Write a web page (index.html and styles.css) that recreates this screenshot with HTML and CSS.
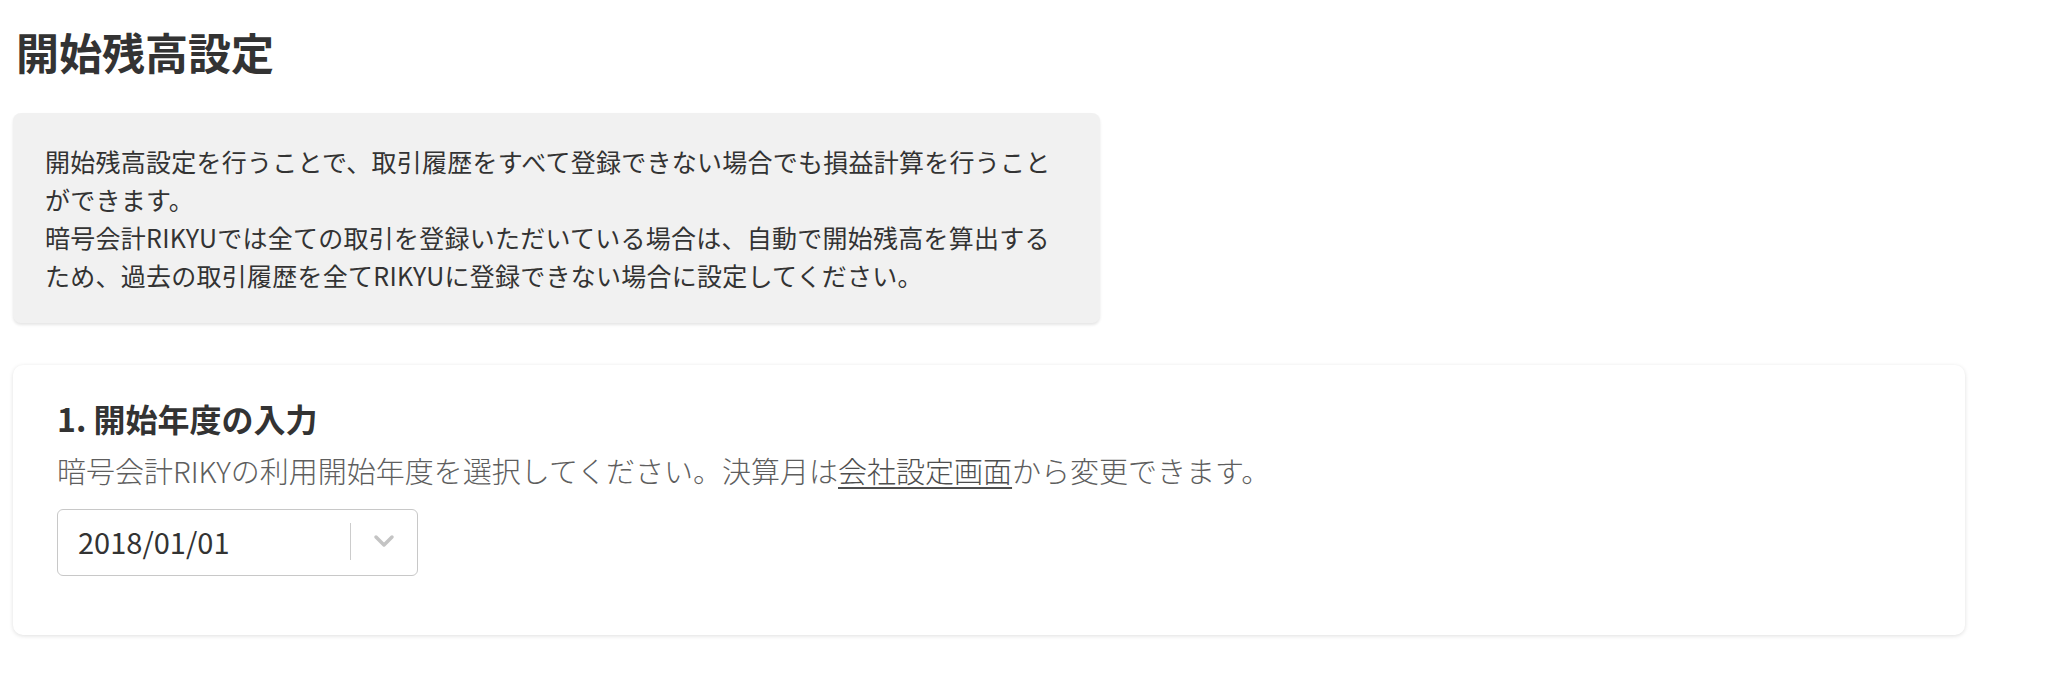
FILE: index.html
```html
<!DOCTYPE html>
<html lang="ja">
<head>
<meta charset="utf-8">
<title>開始残高設定</title>
<link rel="stylesheet" href="styles.css">
</head>
<body>
<main class="page">
  <h1 class="page-title">開始残高設定</h1>
  <div class="notice">
    <p class="notice-text">開始残高設定を行うことで、取引履歴をすべて登録できない場合でも損益計算を行うこと<br>ができます。<br>暗号会計RIKYUでは全ての取引を登録いただいている場合は、自動で開始残高を算出する<br>ため、過去の取引履歴を全てRIKYUに登録できない場合に設定してください。</p>
  </div>
  <section class="card">
    <h2 class="card-title">1. 開始年度の入力</h2>
    <p class="card-desc">暗号会計RIKYの利用開始年度を選択してください。決算月は<a class="link" href="#">会社設定画面</a>から変更できます。</p>
    <div class="select">
      <span class="select-value">2018/01/01</span>
      <span class="select-sep"></span>
      <span class="select-arrow">
        <svg width="22" height="14" viewBox="0 0 22 14"><path d="M3 3 L11 11 L19 3" fill="none" stroke="#c4c4c4" stroke-width="3.5" stroke-linecap="round" stroke-linejoin="round"/></svg>
      </span>
    </div>
  </section>
</main>
</body>
</html>
```

FILE: styles.css
```css
html, body {
  margin: 0;
  padding: 0;
  background: #ffffff;
}
body {
  font-family: "Noto Sans CJK JP", "Noto Sans", sans-serif;
  color: #333333;
}
.page {
  padding: 19px 83px 30px 13px;
  display: flex;
  flex-direction: column;
  align-items: flex-start;
}
.page-title {
  margin: 0 0 0 3px;
  font-size: 43px;
  line-height: 64px;
  font-weight: 700;
  color: #333333;
}
.notice {
  margin-top: 30px;
  width: 1087px;
  box-sizing: border-box;
  padding: 29px 32px;
  background: #f1f1f1;
  border-radius: 8px;
  box-shadow: 0 2px 3px rgba(0, 0, 0, 0.10);
}
.notice-text {
  margin: 0;
  font-size: 25px;
  letter-spacing: 0.25px;
  line-height: 38px;
  color: #333333;
  white-space: nowrap;
}
.card {
  margin-top: 42px;
  align-self: stretch;
  background: #ffffff;
  border-radius: 10px;
  box-shadow: 0 1px 4px rgba(0, 0, 0, 0.13);
  padding: 31px 44px 59px 44px;
}
.card-title {
  margin: 0;
  font-size: 32px;
  line-height: 44px;
  font-weight: 700;
  color: #333333;
}
.card-desc {
  margin: 9px 0 0 0;
  font-size: 29px;
  line-height: 42px;
  font-weight: 300;
  color: #5e5e5e;
}
.link {
  color: #4e4e4e;
  text-decoration: underline;
  text-underline-offset: 4px;
}
.select {
  margin-top: 18px;
  width: 361px;
  height: 67px;
  box-sizing: border-box;
  border: 1.5px solid #c8c8c8;
  border-radius: 6px;
  display: flex;
  align-items: center;
  padding-left: 20px;
  padding-bottom: 3px;
}
.select-value {
  flex: 1;
  font-size: 29px;
  color: #333333;
}
.select-sep {
  width: 1.5px;
  height: 37px;
  background: #cccccc;
}
.select-arrow {
  width: 66px;
  display: flex;
  justify-content: center;
  align-items: center;
}
```
